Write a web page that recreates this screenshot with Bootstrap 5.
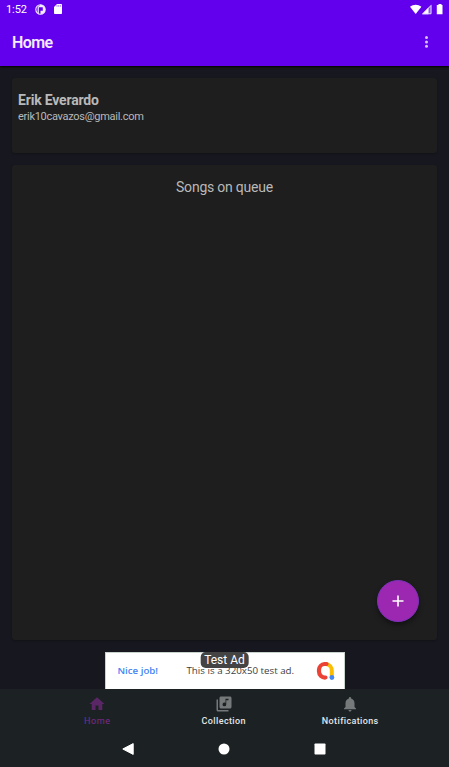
<!DOCTYPE html>
<html lang="en">
<head>
<meta charset="utf-8">
<meta name="viewport" content="width=device-width, initial-scale=1">
<title>Home</title>
<link href="https://cdn.jsdelivr.net/npm/bootstrap@5.3.0/dist/css/bootstrap.min.css" rel="stylesheet">
<style>
body{font-family:Roboto,sans-serif;background:#17171f;color:#b9b9b9;height:767px;overflow:hidden;line-height:1}
svg{display:block;flex:none}
.top-area{background:#6200ee;height:66px;color:#fff;box-shadow:0 1px 2px #000}
.status{height:18px;font-size:11px;letter-spacing:-.1px;padding:0 6px}
.app-title{font-size:16px;letter-spacing:-.6px;font-weight:600;color:#f3eaff;padding-top:2px}
.app-row{height:48px;padding:0 15px 0 12px}
.main-area{padding:12px;gap:12px;height:586px}
.panel{background:#1e1e1e;border:0;border-radius:3px;color:#b9b9b9;box-shadow:0 1px 2px rgba(0,0,0,.25)}
.profile{height:75px;padding:15px 6px}
.profile-name{font-size:14px;letter-spacing:-.18px;font-weight:700;line-height:15px}
.profile-mail{font-size:11px;letter-spacing:-.28px;line-height:13px;margin-top:2px}
.queue{padding-top:15px}
.queue-title{font-size:14px;letter-spacing:-.22px;line-height:15px}
.fab{right:18px;bottom:18px;width:42px;height:42px;background:#9c27b0;border:1px solid #7b32b8;box-shadow:0 3px 5px rgba(0,0,0,.4)}
.ad{width:240px;height:37px;background:#fff;color:#3c4043;font-family:"Open Sans",sans-serif;font-size:9.75px;border:1px solid #c9d3cd;border-bottom:0;padding:0 8px 0 12px}
.ad-label{left:50%;top:-1px;transform:translateX(-50%);background:#444;color:#fff;font:12px/16px Roboto,sans-serif;border-radius:5px;padding:0 4px;height:16px}
.ad-lead{color:#4285f4;font-size:9.700px;font-weight:600;width:69px}
.bottom-area{background:#1c2224;height:78px}
.tabs{height:42px;padding:6px 34px 0}
.tab{width:126.5px;font-size:9px;font-weight:500;letter-spacing:.38px;color:#e4e6e6;gap:4px}
.tab.current{color:#7c2a8c;font-weight:400;letter-spacing:.6px}
.system{height:36px;padding:0 80px}
.system span{width:96px}
</style>
</head>
<body>
<header class="top-area position-relative">
  <div class="status d-flex align-items-center">
    <span>1:52</span>
    <svg class="ms-2" width="11" height="11" viewBox="0 0 11 11"><circle cx="5.500" cy="5.500" r="4.700" fill="none" stroke="#f4edff" stroke-width="1.100"/><path d="M5.500.8a4.700 4.700 0 0 1 0 9.400V6.800H7.800V3.200H3.800v6.500H2.600V3z" fill="#f4edff"/></svg>
    <svg class="ms-2" width="8" height="10" viewBox="0 0 8 10"><path d="M3 0h4.200a.8.8 0 0 1 .8.800v8.400a.8.8 0 0 1-.8.800H.8a.8.8 0 0 1-.8-.8V3z" fill="#fff"/><path d="M3 1v1.800M4.700 1v1.800M6.400 1v1.800" stroke="#9b64f5" stroke-width=".8"/></svg>
    <svg class="ms-auto" width="33" height="11" viewBox="0 0 33 11"><path d="M0 2.700C3.200 0 8.200 0 11.400 2.700L5.700 10z" fill="#fff"/><path d="M21.500.3v9.900h-9.600z" fill="#8f50f4"/><path d="M18.500 3.400v6.800h-6.600z" fill="#fff"/><path d="M21 1.500v8.200h-8z" fill="none" stroke="#e9dcff" stroke-width=".9"/><path d="M28.500 0h3v1h1v9.200h-5.700V1h1.700z" fill="#fff"/></svg>
  </div>
  <div class="app-row d-flex align-items-center justify-content-between">
    <span class="app-title">Home</span>
    <svg width="22" height="14" viewBox="0 0 22 14" fill="#d9c2fb"><circle cx="14.500" cy="2.500" r="1.500"/><circle cx="14.500" cy="6.900" r="1.500"/><circle cx="14.500" cy="11.300" r="1.500"/></svg>
  </div>
</header>
<main class="main-area d-flex flex-column">
  <section class="card panel profile flex-shrink-0">
    <div class="profile-name">Erik Everardo</div>
    <div class="profile-mail">erik10cavazos@gmail.com</div>
  </section>
  <section class="card panel queue flex-fill text-center position-relative">
    <div class="queue-title">Songs on queue</div>
    <button class="fab position-absolute rounded-circle d-flex align-items-center justify-content-center p-0" type="button" aria-label="Add"><svg width="12" height="12" viewBox="0 0 12 12"><path d="M6 .5v11M.5 6h11" stroke="#fff" stroke-width="1.600"/></svg></button>
  </section>
</main>
<aside class="ad mx-auto position-relative d-flex align-items-center">
  <span class="ad-lead">Nice job!</span><span class="text-nowrap">This is a 320x50 test ad.</span>
  <svg class="ms-auto" width="20" height="20" viewBox="0 0 20 20" fill="none"><path d="M10 3A6.500 6.500 0 0 1 15.800 9.800V16" stroke="#fbbc04" stroke-width="4"/><path d="M10.500 3H8.500A6 6 0 0 0 3 8.800V10.500A6 6 0 0 0 9.500 16.500" stroke="#ea4335" stroke-width="4.200" stroke-linecap="round"/><circle cx="15.900" cy="16.500" r="2.400" fill="#4285f4"/></svg>
  <span class="ad-label position-absolute text-nowrap">Test Ad</span>
</aside>
<footer class="bottom-area">
  <nav class="tabs d-flex">
    <div class="tab current d-flex flex-column align-items-center"><svg width="18" height="18" viewBox="0 0 24 24" fill="#5a2665"><path d="M10 20v-6h4v6h5v-8h3L12 3 2 12h3v8z"/></svg><span>Home</span></div>
    <div class="tab d-flex flex-column align-items-center"><svg width="18" height="18" viewBox="0 0 24 24" fill="#76797a"><path d="M20 2H8c-1.100 0-2 .9-2 2v12c0 1.100.9 2 2 2h12c1.100 0 2-.9 2-2V4c0-1.100-.9-2-2-2zm-2 5h-3v5.500a2.500 2.500 0 1 1-2.500-2.500c.570 0 1.080.190 1.500.510V5h4v2zM4 6H2v14c0 1.100.9 2 2 2h14v-2H4V6z"/></svg><span>Collection</span></div>
    <div class="tab d-flex flex-column align-items-center"><svg width="18" height="18" viewBox="0 0 24 24" fill="#76797a"><path d="M12 22c1.100 0 2-.9 2-2h-4c0 1.100.890 2 2 2zm6-6v-5c0-3.070-1.640-5.640-4.500-6.320V4a1.500 1.500 0 0 0-3 0v.680C7.630 5.360 6 7.920 6 11v5l-2 2v1h16v-1z"/></svg><span>Notifications</span></div>
  </nav>
  <div class="system d-flex align-items-center">
    <span class="d-flex justify-content-center"><svg width="12" height="12" viewBox="0 0 12 12"><path d="M11.200.6v10.800L.8 6z" fill="#fff" stroke="#fff" stroke-linejoin="round"/></svg></span>
    <span class="d-flex justify-content-center"><svg width="12" height="12" viewBox="0 0 12 12"><circle cx="6" cy="6" r="5.500" fill="#fff"/></svg></span>
    <span class="d-flex justify-content-center"><svg width="12" height="12" viewBox="0 0 12 12"><rect x=".5" y=".5" width="11" height="11" rx=".8" fill="#fff"/></svg></span>
  </div>
</footer>
<script src="https://cdn.jsdelivr.net/npm/bootstrap@5.3.0/dist/js/bootstrap.bundle.min.js"></script>
</body>
</html>
